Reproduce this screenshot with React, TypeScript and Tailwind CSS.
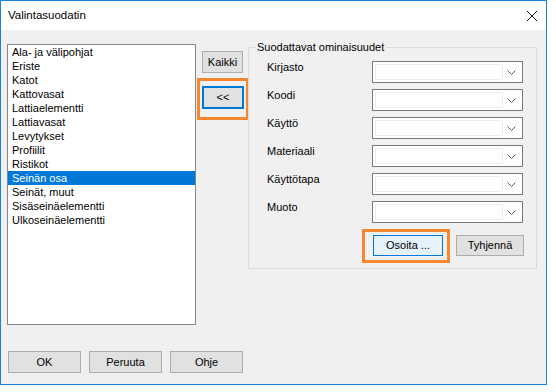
import React from 'react';

const items = [
  'Ala- ja välipohjat',
  'Eriste',
  'Katot',
  'Kattovasat',
  'Lattiaelementti',
  'Lattiavasat',
  'Levytykset',
  'Profiilit',
  'Ristikot',
  'Seinän osa',
  'Seinät, muut',
  'Sisäseinäelementti',
  'Ulkoseinäelementti',
];

const fields = ['Kirjasto', 'Koodi', 'Käyttö', 'Materiaali', 'Käyttötapa', 'Muoto'];

function Combo() {
  return (
    <div className="relative w-[151px] h-[22px] border border-[#7a7a7a] bg-white">
      <div className="absolute left-[2px] top-[2px] w-[128px] h-[16px] border border-[#eeeeee]" />
      <svg className="absolute right-[6px] top-[8px]" width="9" height="5" viewBox="0 0 9 5">
        <path d="M0.5 0.5 L4.5 4.5 L8.5 0.5" fill="none" stroke="#5a5a5a" strokeWidth="1" />
      </svg>
    </div>
  );
}

function Btn({ label, className = '' }: { label: string; className?: string }) {
  return (
    <button
      className={
        'flex items-center justify-center bg-[#e1e1e1] border border-[#adadad] text-[11px] text-black ' +
        className
      }
    >
      {label}
    </button>
  );
}

export default function App() {
  return (
    <div className="w-[556px] h-[392px] bg-white font-['Liberation_Sans',Arial,sans-serif]">
      <div className="w-[547px] h-[385px] border border-[#1883d7] flex flex-col">
        {/* Title bar */}
        <div className="h-[29px] bg-white flex items-center justify-between pl-[7px] pr-[9px]">
          <span className="text-[11.5px] text-black">Valintasuodatin</span>
          <svg width="10" height="10" viewBox="0 0 10 10">
            <path d="M0 0 L10 10 M10 0 L0 10" stroke="#111" strokeWidth="1" />
          </svg>
        </div>

        {/* Body */}
        <div className="flex-1 bg-[#f0f0f0] px-[6px]">
          <div className="flex items-start mt-[14px]">
            {/* List */}
            <div className="w-[189px] h-[281px] border border-[#828790] bg-white text-[11px] text-black">
              {items.map((it) => (
                <div
                  key={it}
                  className={
                    'h-[14px] leading-[14px] pl-[4px] ' +
                    (it === 'Seinän osa' ? 'bg-[#0078d7] text-white' : '')
                  }
                >
                  {it}
                </div>
              ))}
            </div>

            {/* Middle buttons */}
            <div className="ml-[6px] mt-[7px] flex flex-col">
              <Btn label="Kaikki" className="w-[41px] h-[22px]" />
              <div className="relative mt-[13px]">
                <button className="w-[42px] h-[23px] bg-[#e1e1e1] border-2 border-[#0078d7] text-[11px] text-black flex items-center justify-center">
                  &lt;&lt;
                </button>
                <div className="absolute left-[-5px] top-[-8px] w-[52px] h-[42px] border-[3px] border-[#f68630]" />
              </div>
            </div>

            {/* Group box */}
            <div className="relative ml-[4px] mt-[3px] w-[289px] h-[222px] border border-[#dcdcdc]">
              <span className="absolute left-[6px] top-[-8px] px-[2px] bg-[#f0f0f0] text-[11px] leading-[14px] text-black">
                Suodattavat ominaisuudet
              </span>
              <div className="pt-[13px] pl-[18px] flex flex-col gap-[6px]">
                {fields.map((f) => (
                  <div key={f} className="flex items-start">
                    <span className="w-[105px] text-[11px] leading-[13px] text-black">{f}</span>
                    <Combo />
                  </div>
                ))}
                <div className="flex items-start mt-[6px] pl-[106px]">
                  <div className="relative">
                    <button className="w-[70px] h-[21px] bg-[#e5f1fb] border border-[#0078d7] text-[11px] text-black flex items-center justify-center">
                      Osoita ...
                    </button>
                    <div className="absolute left-[-11px] top-[-6px] w-[88px] h-[34px] border-[3px] border-[#f68630]" />
                  </div>
                  <Btn label="Tyhjennä" className="ml-[13px] w-[68px] h-[21px]" />
                </div>
              </div>
            </div>
          </div>

          {/* Bottom buttons */}
          <div className="flex gap-[8px] mt-[26px] ml-[1px]">
            <Btn label="OK" className="w-[73px] h-[22px]" />
            <Btn label="Peruuta" className="w-[73px] h-[22px]" />
            <Btn label="Ohje" className="w-[73px] h-[22px]" />
          </div>
        </div>
      </div>
    </div>
  );
}
